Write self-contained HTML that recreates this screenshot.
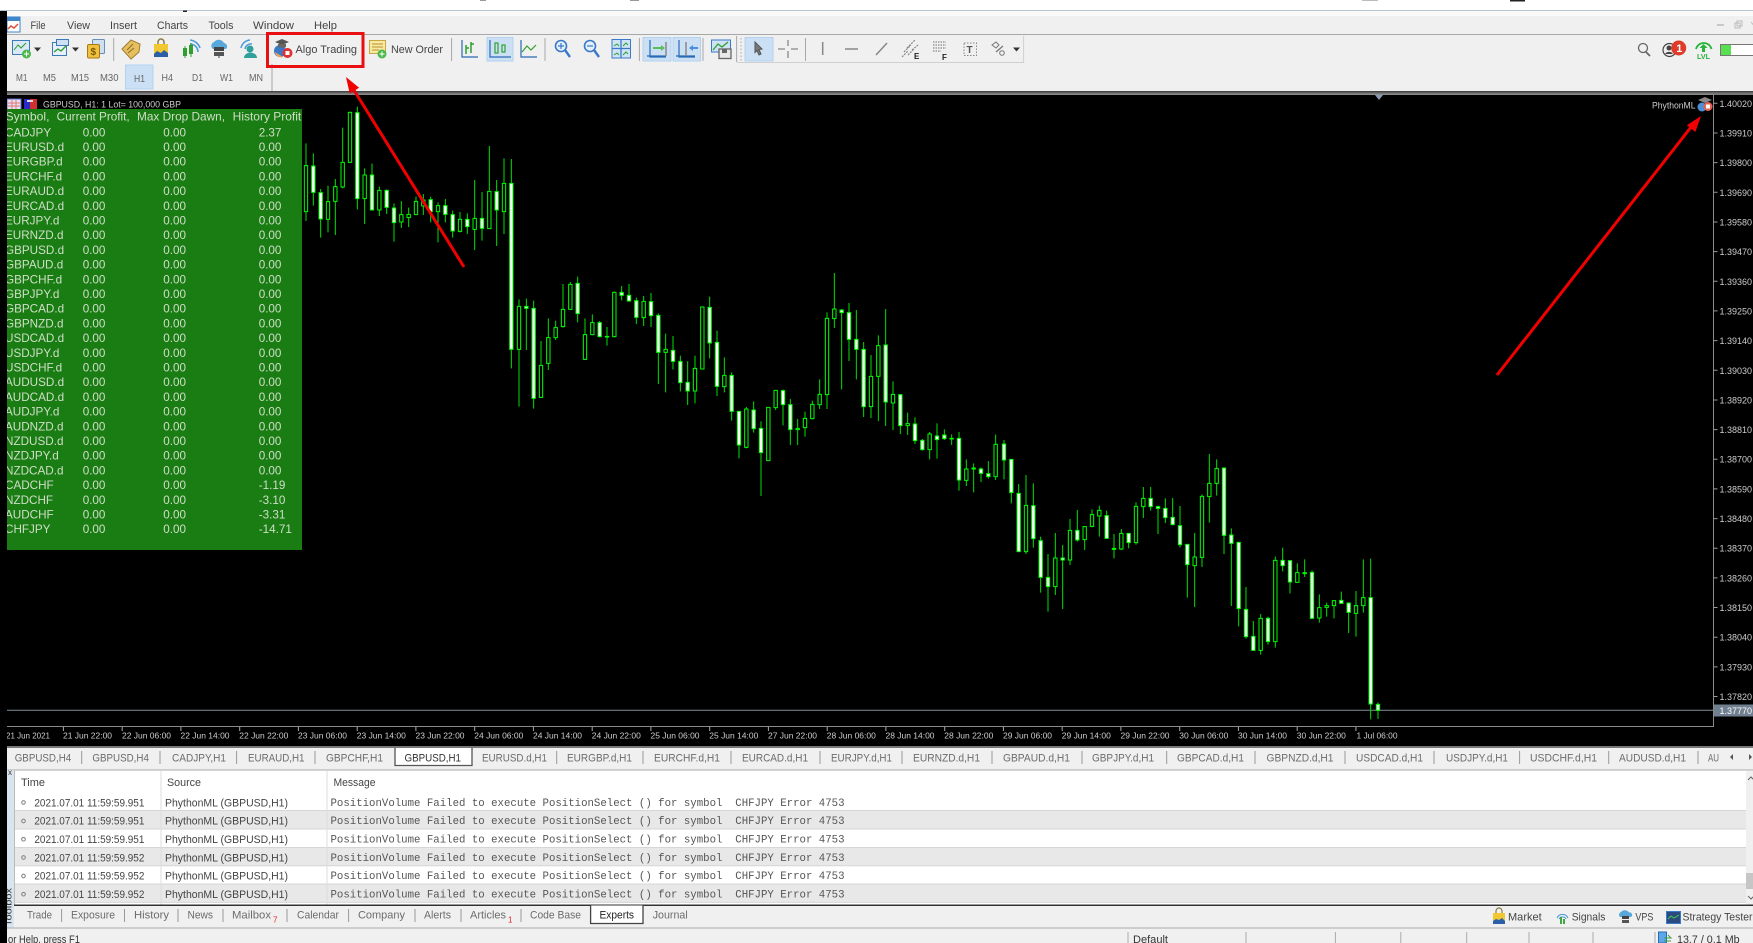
<!DOCTYPE html>
<html><head><meta charset="utf-8"><title>MetaTrader 5</title>
<style>
html,body{margin:0;padding:0;background:#000;width:1753px;height:943px;overflow:hidden}
svg{display:block;filter:blur(.35px)}
text{font-family:"Liberation Sans",sans-serif}
.m{font-size:11.3px;fill:#444}
.tf{font-size:10px;fill:#666}
.tb{font-size:11px;fill:#444}
.r{font-size:11.7px;fill:#cfdec6}
.p{font-size:9px;fill:#ccc}
.t{font-size:8.4px;fill:#ccc}
.tab{font-size:11px;fill:#6c6c6c}
.h{font-size:11px;fill:#444}
.c{font-size:11px;fill:#444}
.msg{font-family:"Liberation Mono",monospace;font-size:10.7px;fill:#555}
</style></head><body>
<svg width="1753" height="943" viewBox="0 0 1753 943" xmlns="http://www.w3.org/2000/svg">
<!-- base -->
<rect width="1753" height="943" fill="#f0f0f0"/>
<rect width="1753" height="10" fill="#fff"/>
<rect y="10" width="1753" height="1" fill="#b8c4d0"/>
<rect y="11" width="1753" height="5" fill="#fafafa"/>
<rect y="34" width="1753" height="1" fill="#a8a8a8"/>
<rect x="1362" y="0" width="16" height="1" fill="#bbb"/><rect x="1510" y="0" width="15" height="1.5" fill="#222"/><rect x="630" y="0" width="9" height="1" fill="#999"/><rect x="480" y="0" width="6" height="1" fill="#999"/><rect x="183" y="10.5" width="4" height="1.5" fill="#222"/>

<!-- menu -->
<g class="m">
<text class="m" x="30.5" y="29" textLength="15" lengthAdjust="spacingAndGlyphs">File</text>
<text class="m" x="67" y="29" textLength="23" lengthAdjust="spacingAndGlyphs">View</text>
<text class="m" x="110" y="29" textLength="27" lengthAdjust="spacingAndGlyphs">Insert</text>
<text class="m" x="157" y="29" textLength="31" lengthAdjust="spacingAndGlyphs">Charts</text>
<text class="m" x="208.5" y="29" textLength="25" lengthAdjust="spacingAndGlyphs">Tools</text>
<text class="m" x="253" y="29" textLength="41" lengthAdjust="spacingAndGlyphs">Window</text>
<text class="m" x="314" y="29" textLength="23" lengthAdjust="spacingAndGlyphs">Help</text>
</g>
<!-- app icon -->
<rect x="7" y="17" width="13" height="15" fill="#fff" stroke="#3f86c8"/><rect x="7" y="17" width="13" height="4" fill="#3f86c8"/><path d="M8 29l3-3 3 2 4-4" stroke="#e0503a" stroke-width="1.5" fill="none"/>
<path d="M1717 25h7" stroke="#bbb" stroke-width="1.5"/><rect x="1735" y="23" width="5" height="5" fill="none" stroke="#bbb"/><rect x="1737" y="21" width="5" height="5" fill="none" stroke="#bbb"/><path d="M1751 22l4 5" stroke="#bbb"/>

<!-- toolbar active backgrounds -->
<g fill="#cce0f5" stroke="#b4d2ee">
<rect x="487" y="37.5" width="26" height="23.5"/><rect x="643" y="37.5" width="28" height="23.5"/><rect x="673" y="37.5" width="27.5" height="23.5"/><rect x="745" y="37.5" width="28" height="23.5"/><rect x="125.5" y="65" width="27.5" height="24"/>
</g>
<!-- separators -->
<path d="M113.7 38v23M451.6 38v23M545 38v23M639.4 38v23M703 38v23M736.6 36v26M805.5 38v23M272 64v27" stroke="#a8a8a8"/>
<path d="M1023.6 36v26M737 62.5h287" stroke="#d0d0d0"/>
<path d="M741 38v23" stroke="#aaa" stroke-dasharray="1.5 2"/>

<!-- new chart -->
<rect x="12.5" y="40.5" width="17" height="14" fill="#dbe9f7" stroke="#3a7ab8"/><path d="M14 50l4-5 3 3 5-5" stroke="#2a9a2a" fill="none"/><circle cx="26.5" cy="54" r="4.5" fill="#4cb84c"/><path d="M24 54h5M26.5 51.5v5" stroke="#fff"/><path d="M34 47.5h7l-3.5 4z" fill="#333"/>
<!-- templates -->
<rect x="52.5" y="42.5" width="14" height="13" fill="#e8f1fa" stroke="#3a7ab8"/><rect x="56.5" y="39.5" width="12" height="6" fill="#cfe0f2" stroke="#3a7ab8"/><path d="M54 52l4-3 3 2 5-5" stroke="#2a9a2a" stroke-width="1.3" fill="none"/><path d="M72 47.5h7l-3.5 4z" fill="#333"/>
<!-- $ docs -->
<rect x="92.5" y="39.5" width="12" height="14" rx="1" fill="#cfe0f2" stroke="#6a8fb5"/><rect x="87.5" y="44.5" width="12" height="13.5" rx="1.5" fill="#f0c040" stroke="#a87a10"/><text x="90.5" y="55" style="font-size:10px;font-weight:bold;fill:#7a5a00">$</text>
<!-- tag -->
<path d="M122 49l9-9 9 4-1 8-8 7z" fill="#e6c060" stroke="#a07d30"/><path d="M127 50l6-6M128 53l6-5" stroke="#8a6a20"/>
<!-- bag -->
<path d="M158 44v-2a3 3 0 0 1 6 0v2" stroke="#8a7a40" fill="none" stroke-width="1.5"/><rect x="154" y="44" width="14" height="13" fill="#f2c832"/><path d="M154 57v-3l3-3 4 2 3-3 4 3v4z" fill="#2b5fa8"/>
<!-- signals -->
<path d="M190 44a8 8 0 0 1 8 8M190 40a12 12 0 0 1 10 8" stroke="#4a9ad4" stroke-width="1.6" fill="none"/><rect x="183" y="48" width="4" height="8" fill="#2fa02f"/><rect x="189" y="45" width="4" height="9" fill="#2fa02f"/><path d="M185 46v12M191 43v14" stroke="#2fa02f"/>
<!-- vps -->
<path d="M213 49a4 4 0 0 1 1-7 6 6 0 0 1 10 1 3.5 3.5 0 0 1 2 6z" fill="#58a8dc"/><rect x="214" y="47" width="10" height="4" fill="#444"/><rect x="214" y="52" width="10" height="4" fill="#555"/><path d="M219 56v2" stroke="#444"/>
<!-- profile -->
<path d="M250 40a10 10 0 0 0-9 8M252 44a6 6 0 0 0-7 5" stroke="#4a9ad4" stroke-width="1.5" fill="none"/><circle cx="250" cy="49" r="3.5" fill="#2fa09a"/><path d="M244 58a6 5 0 0 1 13 0z" fill="#2fa09a"/>
<!-- algo -->
<circle cx="280" cy="51" r="6" fill="#3a78c8"/><path d="M275 52a6 6 0 0 0 8 5z" fill="#f0a050"/><path d="M275 42l7-3 7 3-7 3z" fill="#555"/><path d="M278 44v3a5 2 0 0 0 8 0v-3" fill="#666"/><circle cx="287.5" cy="53" r="5" fill="#e03030"/><rect x="285.5" y="51" width="4" height="4" fill="#fff"/>
<text class="tb" x="295.5" y="53" textLength="61.5" lengthAdjust="spacingAndGlyphs">Algo Trading</text>
<!-- new order -->
<rect x="369.5" y="40.5" width="16" height="13" fill="#f8e9a0" stroke="#c8a640"/><path d="M372 44h11M372 47h11M372 50h7" stroke="#b89030"/><circle cx="382" cy="54" r="4.5" fill="#4cb84c"/><path d="M379.5 54h5M382 51.5v5" stroke="#fff"/>
<text class="tb" x="391" y="53" textLength="52" lengthAdjust="spacingAndGlyphs">New Order</text>
<!-- bars/candles/line -->
<g fill="none" stroke-width="1.2">
<path d="M462 40v17h16" stroke="#2a6ab5"/><path d="M466 45v9M469 48h-3M471 42v11M474 44h-3" stroke="#2fa02f" stroke-width="1.5"/>
<path d="M490 40v17h21" stroke="#2a6ab5"/><rect x="495" y="43" width="3" height="10" stroke="#2fa02f"/><rect x="502" y="45" width="3" height="7" stroke="#2fa02f"/>
<path d="M521 40v17h16" stroke="#2a6ab5"/><path d="M522 52l5-6 4 4 5-5" stroke="#2fa02f"/>
<circle cx="561" cy="46" r="5.5" stroke="#3a78c8" stroke-width="1.6" fill="#e4f0fb"/><path d="M565 50l5 7" stroke="#3a78c8" stroke-width="2.4"/><path d="M558 46h6M561 43v6" stroke="#3a78c8"/>
<circle cx="590" cy="46" r="5.5" stroke="#3a78c8" stroke-width="1.6" fill="#e4f0fb"/><path d="M594 50l5 7" stroke="#3a78c8" stroke-width="2.4"/><path d="M587 46h6" stroke="#3a78c8"/>
</g>
<!-- tile -->
<rect x="612" y="39.5" width="18.5" height="18.5" fill="#cfe3f7" stroke="#3a78c8"/><path d="M621 39.5v18.5M612 48.5h18.5" stroke="#3a78c8" stroke-width="1.3"/><path d="M614 46l3-2 2 2M623 46l3-3 2 2M614 55l3-2 2 2M623 55l3-3 2 2" stroke="#2fa02f" fill="none"/>
<!-- scroll/shift -->
<path d="M650 40v17h16M647 56h19" stroke="#2a6ab5" stroke-width="1.2" fill="none"/><path d="M653 47h8v-2l4 3-4 3v-2h-8z" fill="#5abf5a"/><path d="M666 42v14" stroke="#888" stroke-width="1.5"/>
<path d="M679 40v17h16M676 56h19" stroke="#2a6ab5" stroke-width="1.2" fill="none"/><path d="M698 47h-5v-2l-4 3 4 3v-2h5z" fill="#4a90e0"/><path d="M686 42v14" stroke="#888" stroke-width="1.5"/>
<!-- save -->
<rect x="711.5" y="40" width="19" height="12" fill="#cfe3f7" stroke="#3a78c8"/><path d="M713 50l5-6 4 3 6-5" stroke="#2fa02f" fill="none" stroke-width="1.3"/><rect x="719" y="49" width="12" height="9.5" fill="#e8e8e8" stroke="#666" stroke-width="1.3"/><rect x="722" y="49" width="5" height="4" fill="#666"/>
<!-- cursor -->
<path d="M755 42l7 7-3 .5 2 4.5-2 1-2-4.500-2 2z" fill="#777" stroke="#555"/>
<!-- crosshair -->
<path d="M788 40v6M788 51v7M778 49h7M791 49h7" stroke="#888" stroke-width="1.3"/>
<path d="M822.700 42v13M845 49h13M876 55l11-12" stroke="#888" stroke-width="1.5"/>
<!-- fib E -->
<path d="M902 57l6-6M904 52l7-7M907 48l8-8M908 55l6-6M912 50l6-5" stroke="#888" stroke-width="1.2" stroke-dasharray="2 1"/>
<text x="914" y="59" style="font-size:8px;font-weight:bold;fill:#222">E</text>
<path d="M933 42h13M933 45h13M933 48h13M933 51h8" stroke="#999" stroke-width="1.5" stroke-dasharray="1.500 1"/>
<text x="942" y="60" style="font-size:8px;font-weight:bold;fill:#222">F</text>
<rect x="964" y="43" width="12.5" height="12.5" fill="none" stroke="#888" stroke-dasharray="1.500 1.500"/>
<text x="966.500" y="53" style="font-size:10px;font-weight:bold;fill:#555">T</text>
<path d="M992 45l4-3 3 3-3 3z" fill="none" stroke="#777"/><path d="M996 52l7-6" stroke="#777" stroke-width="1.3"/><circle cx="1002" cy="53" r="2.300" fill="none" stroke="#777"/>
<path d="M1013 47.500h7l-3.500 4z" fill="#333"/>

<!-- timeframes -->
<g>
<text class="tf" x="16" y="81" textLength="11.500" lengthAdjust="spacingAndGlyphs">M1</text>
<text class="tf" x="43" y="81" textLength="13" lengthAdjust="spacingAndGlyphs">M5</text>
<text class="tf" x="71" y="81" textLength="18" lengthAdjust="spacingAndGlyphs">M15</text>
<text class="tf" x="100" y="81" textLength="18.500" lengthAdjust="spacingAndGlyphs">M30</text>
<text class="tf" x="134" y="82" textLength="11" lengthAdjust="spacingAndGlyphs">H1</text>
<text class="tf" x="161.500" y="81" textLength="11.500" lengthAdjust="spacingAndGlyphs">H4</text>
<text class="tf" x="192" y="81" textLength="11" lengthAdjust="spacingAndGlyphs">D1</text>
<text class="tf" x="220" y="81" textLength="13" lengthAdjust="spacingAndGlyphs">W1</text>
<text class="tf" x="249" y="81" textLength="14" lengthAdjust="spacingAndGlyphs">MN</text>
</g>
<!-- right top icons -->
<circle cx="1643" cy="48" r="4.500" fill="none" stroke="#666" stroke-width="1.300"/><path d="M1646 52l4 4" stroke="#666" stroke-width="1.800"/>
<circle cx="1669.500" cy="50" r="6.500" fill="#eee" stroke="#444" stroke-width="1.200"/><circle cx="1669" cy="48" r="2.500" fill="#444"/><path d="M1665 54a4.500 4 0 0 1 8 0" fill="#444"/>
<circle cx="1678.700" cy="48" r="7.500" fill="#e03a28"/><text x="1676.300" y="52" style="font-size:11px;font-weight:bold;fill:#fff">1</text>
<path d="M1696 49a8 8 0 0 1 15.500 0" stroke="#27b43a" stroke-width="1.800" fill="none"/><path d="M1703.500 44l-4 4h2.500v4h3v-4h2.500z" fill="#27b43a"/><text x="1697" y="59" textLength="13" lengthAdjust="spacingAndGlyphs" style="font-size:7px;font-weight:bold;fill:#27b43a">LVL</text>
<rect x="1720.500" y="44.500" width="34" height="11" fill="#fff" stroke="#777"/><rect x="1721" y="45" width="10" height="10" fill="#58e050"/>

<!-- chart -->
<rect x="0" y="91" width="1753" height="4" fill="#777"/><rect x="0" y="91" width="1753" height="1.500" fill="#444"/>
<rect x="0" y="95" width="1753" height="653" fill="#000"/>
<path d="M7 94.500H1713.500V726.500H7" fill="none" stroke="#8a8a8a"/>
<rect x="7" y="99" width="14" height="11" fill="#e6e0f0" stroke="#5a6ad0"/><path d="M8 103h12M8 106h12M12 100v9M16 100v9" stroke="#e07878"/>
<rect x="24" y="99" width="13" height="11" fill="#2a2ac8"/><rect x="30" y="99" width="7" height="11" fill="#d03030"/><rect x="27" y="100" width="6" height="2" fill="#ddd"/>
<text class="p" x="43" y="107.500" textLength="138" lengthAdjust="spacingAndGlyphs">GBPUSD, H1:  1 Lot= 100,000 GBP</text>
<path d="M1375 95h8l-4 5z" fill="#8a9bb0"/>
<text class="p" x="1652" y="108.500" textLength="43.500" lengthAdjust="spacingAndGlyphs">PhythonML</text>
<path d="M1698 100l7-3 7 3-7 3z" fill="#888"/><circle cx="1702" cy="107" r="4.500" fill="#4a90d8"/><circle cx="1708" cy="106.500" r="4.500" fill="#e86050"/><rect x="1706" y="104.500" width="4" height="4" fill="#fff"/>

<!-- table -->
<rect x="7" y="109" width="295" height="441" fill="#1a7d14"/>
<g class="r">
<text class="r" x="5.500" y="120.500" textLength="44" lengthAdjust="spacingAndGlyphs">Symbol,</text>
<text class="r" x="56.700" y="120.500" textLength="73" lengthAdjust="spacingAndGlyphs">Current Profit,</text>
<text class="r" x="137" y="120.500" textLength="88" lengthAdjust="spacingAndGlyphs">Max Drop Dawn,</text>
<text class="r" x="232.700" y="120.500" textLength="68.500" lengthAdjust="spacingAndGlyphs">History Profit</text>
<text class="r" y="136.300"><tspan x="5">CADJPY</tspan><tspan x="82.700">0.00</tspan><tspan x="163.300">0.00</tspan><tspan x="258.700">2.37</tspan></text>
<text class="r" y="151"><tspan x="5">EURUSD.d</tspan><tspan x="82.700">0.00</tspan><tspan x="163.300">0.00</tspan><tspan x="258.700">0.00</tspan></text>
<text class="r" y="165.700"><tspan x="5">EURGBP.d</tspan><tspan x="82.700">0.00</tspan><tspan x="163.300">0.00</tspan><tspan x="258.700">0.00</tspan></text>
<text class="r" y="180.400"><tspan x="5">EURCHF.d</tspan><tspan x="82.700">0.00</tspan><tspan x="163.300">0.00</tspan><tspan x="258.700">0.00</tspan></text>
<text class="r" y="195.100"><tspan x="5">EURAUD.d</tspan><tspan x="82.700">0.00</tspan><tspan x="163.300">0.00</tspan><tspan x="258.700">0.00</tspan></text>
<text class="r" y="209.800"><tspan x="5">EURCAD.d</tspan><tspan x="82.700">0.00</tspan><tspan x="163.300">0.00</tspan><tspan x="258.700">0.00</tspan></text>
<text class="r" y="224.500"><tspan x="5">EURJPY.d</tspan><tspan x="82.700">0.00</tspan><tspan x="163.300">0.00</tspan><tspan x="258.700">0.00</tspan></text>
<text class="r" y="239.200"><tspan x="5">EURNZD.d</tspan><tspan x="82.700">0.00</tspan><tspan x="163.300">0.00</tspan><tspan x="258.700">0.00</tspan></text>
<text class="r" y="253.900"><tspan x="5">GBPUSD.d</tspan><tspan x="82.700">0.00</tspan><tspan x="163.300">0.00</tspan><tspan x="258.700">0.00</tspan></text>
<text class="r" y="268.600"><tspan x="5">GBPAUD.d</tspan><tspan x="82.700">0.00</tspan><tspan x="163.300">0.00</tspan><tspan x="258.700">0.00</tspan></text>
<text class="r" y="283.300"><tspan x="5">GBPCHF.d</tspan><tspan x="82.700">0.00</tspan><tspan x="163.300">0.00</tspan><tspan x="258.700">0.00</tspan></text>
<text class="r" y="298"><tspan x="5">GBPJPY.d</tspan><tspan x="82.700">0.00</tspan><tspan x="163.300">0.00</tspan><tspan x="258.700">0.00</tspan></text>
<text class="r" y="312.700"><tspan x="5">GBPCAD.d</tspan><tspan x="82.700">0.00</tspan><tspan x="163.300">0.00</tspan><tspan x="258.700">0.00</tspan></text>
<text class="r" y="327.400"><tspan x="5">GBPNZD.d</tspan><tspan x="82.700">0.00</tspan><tspan x="163.300">0.00</tspan><tspan x="258.700">0.00</tspan></text>
<text class="r" y="342.100"><tspan x="5">USDCAD.d</tspan><tspan x="82.700">0.00</tspan><tspan x="163.300">0.00</tspan><tspan x="258.700">0.00</tspan></text>
<text class="r" y="356.800"><tspan x="5">USDJPY.d</tspan><tspan x="82.700">0.00</tspan><tspan x="163.300">0.00</tspan><tspan x="258.700">0.00</tspan></text>
<text class="r" y="371.500"><tspan x="5">USDCHF.d</tspan><tspan x="82.700">0.00</tspan><tspan x="163.300">0.00</tspan><tspan x="258.700">0.00</tspan></text>
<text class="r" y="386.200"><tspan x="5">AUDUSD.d</tspan><tspan x="82.700">0.00</tspan><tspan x="163.300">0.00</tspan><tspan x="258.700">0.00</tspan></text>
<text class="r" y="400.900"><tspan x="5">AUDCAD.d</tspan><tspan x="82.700">0.00</tspan><tspan x="163.300">0.00</tspan><tspan x="258.700">0.00</tspan></text>
<text class="r" y="415.600"><tspan x="5">AUDJPY.d</tspan><tspan x="82.700">0.00</tspan><tspan x="163.300">0.00</tspan><tspan x="258.700">0.00</tspan></text>
<text class="r" y="430.300"><tspan x="5">AUDNZD.d</tspan><tspan x="82.700">0.00</tspan><tspan x="163.300">0.00</tspan><tspan x="258.700">0.00</tspan></text>
<text class="r" y="445"><tspan x="5">NZDUSD.d</tspan><tspan x="82.700">0.00</tspan><tspan x="163.300">0.00</tspan><tspan x="258.700">0.00</tspan></text>
<text class="r" y="459.700"><tspan x="5">NZDJPY.d</tspan><tspan x="82.700">0.00</tspan><tspan x="163.300">0.00</tspan><tspan x="258.700">0.00</tspan></text>
<text class="r" y="474.400"><tspan x="5">NZDCAD.d</tspan><tspan x="82.700">0.00</tspan><tspan x="163.300">0.00</tspan><tspan x="258.700">0.00</tspan></text>
<text class="r" y="489.100"><tspan x="5">CADCHF</tspan><tspan x="82.700">0.00</tspan><tspan x="163.300">0.00</tspan><tspan x="258.700">-1.19</tspan></text>
<text class="r" y="503.800"><tspan x="5">NZDCHF</tspan><tspan x="82.700">0.00</tspan><tspan x="163.300">0.00</tspan><tspan x="258.700">-3.10</tspan></text>
<text class="r" y="518.500"><tspan x="5">AUDCHF</tspan><tspan x="82.700">0.00</tspan><tspan x="163.300">0.00</tspan><tspan x="258.700">-3.31</tspan></text>
<text class="r" y="533.200"><tspan x="5">CHFJPY</tspan><tspan x="82.700">0.00</tspan><tspan x="163.300">0.00</tspan><tspan x="258.700">-14.71</tspan></text>
</g>

<!-- price line -->
<path d="M7 710.300H1714" stroke="#7e8c96"/>

<!-- candles -->
<g transform="translate(300,90) scale(.33333)" stroke-width="3" stroke="#00e000">
<path fill="none" d="M18 160V393M40 190V347M62 297V443M84 287V427M106 267V435M128 113V295M150 65V218M172 50V358M194 235V402M216 221V361M238 290V378M260 298V372M282 340V455M304 333V414M326 353V411M348 320V375M370 312V375M392 320V397M414 337V457M436 327V397M458 362V443M480 366V427M502 370V432M524 270V480M546 306V452M568 168V416M590 270V468M612 205V432M634 207V835"/>
<path fill="#000" stroke="#00ff00" d="M13 227h10V365h-10zM79 335h10V388h-10zM101 290h10V334h-10zM123 217h10V291h-10zM145 67h10V217h-10zM189 255h10V326h-10zM233 301h10V360h-10zM299 374h10V396h-10zM321 373h10V383h-10zM343 334h10V374h-10zM365 330h10V348h-10zM409 347h10V365h-10zM475 388h10V424h-10zM519 385h10V418h-10zM563 304h10V416h-10zM607 280h10V365h-10z"/>
<path fill="#fff" stroke="#00ff00" d="M35 228h10V307h-10zM57 308h10V387h-10zM167 68h10V326h-10zM211 255h10V360h-10zM255 301h10V352h-10zM277 354h10V398h-10zM387 329h10V365h-10zM431 347h10V373h-10zM453 374h10V423h-10zM497 388h10V410h-10zM541 385h10V415h-10zM585 305h10V360h-10zM629 280h10V778h-10z"/>
</g>
<g transform="translate(500,260) scale(.33333)" stroke-width="3" stroke="#00e000">
<path fill="none" d="M57 118V440M79 116V270M101 122V446M123 243V414M145 175V330M167 182V240M189 72V203M211 66V149M233 50V187M255 175V300M277 163V226M299 183V232M321 201V257M343 94V232M365 78V121M387 72V125M409 113V192M431 108V198M453 99V201M475 160V372M497 221V397M519 228V328M541 287V394M563 304V435M585 287V430M607 139V328M629 110V295M651 212V408M673 292V397M695 337V482M717 453V595M739 441V565M761 424V518M783 484V708M805 441V603M827 390V450M849 388V496M871 417V555M893 477V555M915 455V530M937 422V478M959 358V447M981 157V447M1003 39V204M1025 147V388M1047 129V303M1069 150V358M1091 246V471M1113 285V474M1135 226V483M1157 147V498M1179 364V510M1201 403V522M1223 458V525M1245 472V552M1267 537V572M1289 516V598M1311 490V596M1333 508V540M1355 523V555M1377 516V692M1399 598V678M1421 610V697M1443 622V666M1465 603V656M1487 524V660"/>
<path fill="#000" stroke="#00ff00" d="M52 139h10V268h-10zM118 316h10V412h-10zM140 233h10V310h-10zM162 203h10V233h-10zM184 148h10V200h-10zM206 73h10V148h-10zM250 224h10V298h-10zM272 188h10V224h-10zM316 229h10V231h-10zM338 97h10V230h-10zM426 124h10V173h-10zM492 268h10V277h-10zM580 325h10V393h-10zM602 141h10V327h-10zM668 346h10V380h-10zM734 447h10V562h-10zM800 442h10V602h-10zM822 391h10V443h-10zM888 505h10V509h-10zM910 475h10V503h-10zM932 433h10V476h-10zM954 403h10V434h-10zM976 175h10V404h-10zM998 147h10V176h-10zM1108 349h10V440h-10zM1130 257h10V349h-10zM1174 403h10V429h-10zM1218 491h10V497h-10zM1284 522h10V569h-10zM1350 535h10V537h-10zM1394 627h10V661h-10zM1416 624h10V627h-10zM1482 553h10V650h-10z"/>
<path fill="#fff" stroke="#00ff00" d="M74 139h10V145h-10zM96 145h10V415h-10zM228 70h10V161h-10zM294 188h10V230h-10zM360 97h10V106h-10zM382 106h10V123h-10zM404 122h10V172h-10zM448 125h10V167h-10zM470 166h10V277h-10zM514 271h10V304h-10zM536 304h10V368h-10zM558 367h10V393h-10zM624 142h10V249h-10zM646 247h10V379h-10zM690 346h10V454h-10zM712 454h10V555h-10zM756 450h10V506h-10zM778 505h10V578h-10zM844 392h10V434h-10zM866 434h10V509h-10zM1020 150h10V158h-10zM1042 158h10V238h-10zM1064 238h10V268h-10zM1086 268h10V440h-10zM1152 255h10V426h-10zM1196 404h10V497h-10zM1240 492h10V542h-10zM1262 541h10V569h-10zM1306 528h10V539h-10zM1328 525h10V536h-10zM1372 535h10V660h-10zM1438 627h10V640h-10zM1460 641h10V650h-10z"/>
</g>
<g transform="translate(1000,440) scale(.33333)" stroke-width="3" stroke="#00e000">
<path fill="none" d="M12 0V118M34 58V190M56 132V335M78 105V342M100 130V323M122 290V458M144 342V515M166 279V465M188 315V507M210 237V375M232 210V305M254 258V330M276 208V262M298 197V290M320 212V297M342 282V355M364 267V330M386 280V325M408 187V314M430 141V234M452 141V212M474 197V282M496 175V249M518 174V256M540 198V322M562 313V473M584 279V501M606 163V381M628 42V248M650 58V167M672 83V342M694 265V498M716 305V559M738 441V596M760 543V632M782 522V644M804 530V614M826 350V623M848 323V394M870 362V460M892 370V428M914 358V411M936 391V537M958 463V548M980 488V530M1002 481V535M1024 455V491M1046 488V579M1068 453V590M1090 358V518M1112 356V838M1134 787V837"/>
<path fill="#000" stroke="#00ff00" d="M73 196h10V335h-10zM161 354h10V440h-10zM205 271h10V360h-10zM249 260h10V299h-10zM271 224h10V259h-10zM293 211h10V228h-10zM337 325h10V328h-10zM359 280h10V327h-10zM403 199h10V308h-10zM425 175h10V200h-10zM579 351h10V377h-10zM601 169h10V352h-10zM623 130h10V170h-10zM645 86h10V130h-10zM777 535h10V631h-10zM821 361h10V605h-10zM887 398h10V427h-10zM909 398h10V401h-10zM953 503h10V534h-10zM975 497h10V502h-10zM997 482h10V497h-10zM1063 497h10V520h-10zM1085 473h10V497h-10z"/>
<path fill="#fff" stroke="#00ff00" d="M7 12h10V60h-10zM29 58h10V158h-10zM51 160h10V335h-10zM95 197h10V296h-10zM117 302h10V412h-10zM139 412h10V440h-10zM183 354h10V360h-10zM227 271h10V300h-10zM315 227h10V295h-10zM381 280h10V308h-10zM447 175h10V200h-10zM469 200h10V205h-10zM491 205h10V233h-10zM513 232h10V254h-10zM535 257h10V314h-10zM557 313h10V374h-10zM667 84h10V286h-10zM689 285h10V310h-10zM711 307h10V506h-10zM733 508h10V590h-10zM755 589h10V631h-10zM799 535h10V605h-10zM843 361h10V377h-10zM865 362h10V426h-10zM931 397h10V535h-10zM1019 481h10V490h-10zM1041 489h10V517h-10zM1107 473h10V792h-10zM1129 793h10V811h-10z"/>
</g>

<!-- price axis -->
<g>
<path d="M1713.500 103.300h4M1713.500 133h4M1713.500 162.600h4M1713.500 192.300h4M1713.500 222h4M1713.500 251.600h4M1713.500 281.300h4M1713.500 310.900h4M1713.500 340.600h4M1713.500 370.300h4M1713.500 400h4M1713.500 429.600h4M1713.500 459.200h4M1713.500 488.900h4M1713.500 518.600h4M1713.500 548.200h4M1713.500 577.900h4M1713.500 607.500h4M1713.500 637.200h4M1713.500 666.900h4M1713.500 696.500h4" stroke="#999"/>
<text class="p" x="1719.500" y="106.800">1.40020</text><text class="p" x="1719.500" y="136.500">1.39910</text><text class="p" x="1719.500" y="166.100">1.39800</text><text class="p" x="1719.500" y="195.800">1.39690</text><text class="p" x="1719.500" y="225.500">1.39580</text><text class="p" x="1719.500" y="255.100">1.39470</text><text class="p" x="1719.500" y="284.800">1.39360</text><text class="p" x="1719.500" y="314.400">1.39250</text><text class="p" x="1719.500" y="344.100">1.39140</text><text class="p" x="1719.500" y="373.800">1.39030</text><text class="p" x="1719.500" y="403.500">1.38920</text><text class="p" x="1719.500" y="433.100">1.38810</text><text class="p" x="1719.500" y="462.700">1.38700</text><text class="p" x="1719.500" y="492.400">1.38590</text><text class="p" x="1719.500" y="522.100">1.38480</text><text class="p" x="1719.500" y="551.700">1.38370</text><text class="p" x="1719.500" y="581.400">1.38260</text><text class="p" x="1719.500" y="611">1.38150</text><text class="p" x="1719.500" y="640.700">1.38040</text><text class="p" x="1719.500" y="670.400">1.37930</text><text class="p" x="1719.500" y="700">1.37820</text>
</g>
<rect x="1714" y="704.500" width="39" height="12" fill="#708090"/><text class="p" x="1719.500" y="714" style="fill:#fff">1.37770</text>

<!-- time axis -->
<path d="M63.400 727v4M122.200 727v4M180.900 727v4M239.700 727v4M298.400 727v4M357.200 727v4M415.900 727v4M474.700 727v4M533.400 727v4M592.200 727v4M650.900 727v4M709.700 727v4M768.400 727v4M827.200 727v4M885.900 727v4M944.700 727v4M1003.400 727v4M1062.200 727v4M1120.900 727v4M1179.700 727v4M1238.400 727v4M1297.200 727v4M1355.900 727v4" stroke="#aaa"/>
<g>
<text class="t" x="6" y="738.500" textLength="44" lengthAdjust="spacingAndGlyphs">21 Jun 2021</text>
<text class="t" x="63" y="738.500" textLength="49" lengthAdjust="spacingAndGlyphs">21 Jun 22:00</text>
<text class="t" x="122" y="738.500" textLength="49" lengthAdjust="spacingAndGlyphs">22 Jun 06:00</text>
<text class="t" x="180.500" y="738.500" textLength="49" lengthAdjust="spacingAndGlyphs">22 Jun 14:00</text>
<text class="t" x="239.300" y="738.500" textLength="49" lengthAdjust="spacingAndGlyphs">22 Jun 22:00</text>
<text class="t" x="298" y="738.500" textLength="49" lengthAdjust="spacingAndGlyphs">23 Jun 06:00</text>
<text class="t" x="356.800" y="738.500" textLength="49" lengthAdjust="spacingAndGlyphs">23 Jun 14:00</text>
<text class="t" x="415.500" y="738.500" textLength="49" lengthAdjust="spacingAndGlyphs">23 Jun 22:00</text>
<text class="t" x="474.300" y="738.500" textLength="49" lengthAdjust="spacingAndGlyphs">24 Jun 06:00</text>
<text class="t" x="533" y="738.500" textLength="49" lengthAdjust="spacingAndGlyphs">24 Jun 14:00</text>
<text class="t" x="591.800" y="738.500" textLength="49" lengthAdjust="spacingAndGlyphs">24 Jun 22:00</text>
<text class="t" x="650.500" y="738.500" textLength="49" lengthAdjust="spacingAndGlyphs">25 Jun 06:00</text>
<text class="t" x="709.300" y="738.500" textLength="49" lengthAdjust="spacingAndGlyphs">25 Jun 14:00</text>
<text class="t" x="768" y="738.500" textLength="49" lengthAdjust="spacingAndGlyphs">27 Jun 22:00</text>
<text class="t" x="826.800" y="738.500" textLength="49" lengthAdjust="spacingAndGlyphs">28 Jun 06:00</text>
<text class="t" x="885.500" y="738.500" textLength="49" lengthAdjust="spacingAndGlyphs">28 Jun 14:00</text>
<text class="t" x="944.300" y="738.500" textLength="49" lengthAdjust="spacingAndGlyphs">28 Jun 22:00</text>
<text class="t" x="1003" y="738.500" textLength="49" lengthAdjust="spacingAndGlyphs">29 Jun 06:00</text>
<text class="t" x="1061.800" y="738.500" textLength="49" lengthAdjust="spacingAndGlyphs">29 Jun 14:00</text>
<text class="t" x="1120.500" y="738.500" textLength="49" lengthAdjust="spacingAndGlyphs">29 Jun 22:00</text>
<text class="t" x="1179.300" y="738.500" textLength="49" lengthAdjust="spacingAndGlyphs">30 Jun 06:00</text>
<text class="t" x="1238" y="738.500" textLength="49" lengthAdjust="spacingAndGlyphs">30 Jun 14:00</text>
<text class="t" x="1296.800" y="738.500" textLength="49" lengthAdjust="spacingAndGlyphs">30 Jun 22:00</text>
<text class="t" x="1356.500" y="738.500" textLength="41" lengthAdjust="spacingAndGlyphs">1 Jul 06:00</text>
</g>

<!-- chart tabs -->
<rect x="0" y="746" width="1753" height="2" fill="#777"/>
<rect x="0" y="748" width="1753" height="22" fill="#f0f0f0"/>
<path d="M395 748V765.500H472V748" fill="#fff" stroke="#555" stroke-width="1.300"/>
<path d="M81.700 751v13M160 751v13M236.600 751v13M315 751v13M556.700 751v13M643 751v13M731 751v13M820 751v13M902 751v13M992 751v13M1082 751v13M1166.700 751v13M1255 751v13M1345 751v13M1434 751v13M1519.600 751v13M1608.700 751v13M1698 751v13" stroke="#999"/>
<g>
<text class="tab" x="14.700" y="761.500" textLength="56.500" lengthAdjust="spacingAndGlyphs">GBPUSD,H4</text>
<text class="tab" x="92.400" y="761.500" textLength="56.500" lengthAdjust="spacingAndGlyphs">GBPUSD,H4</text>
<text class="tab" x="172" y="761.500" textLength="54" lengthAdjust="spacingAndGlyphs">CADJPY,H1</text>
<text class="tab" x="248" y="761.500" textLength="56.500" lengthAdjust="spacingAndGlyphs">EURAUD,H1</text>
<text class="tab" x="326" y="761.500" textLength="57" lengthAdjust="spacingAndGlyphs">GBPCHF,H1</text>
<text class="tab" x="404.500" y="761.500" textLength="56.500" lengthAdjust="spacingAndGlyphs" style="fill:#333">GBPUSD,H1</text>
<text class="tab" x="482" y="761.500" textLength="65" lengthAdjust="spacingAndGlyphs">EURUSD.d,H1</text>
<text class="tab" x="567" y="761.500" textLength="65" lengthAdjust="spacingAndGlyphs">EURGBP.d,H1</text>
<text class="tab" x="654" y="761.500" textLength="66" lengthAdjust="spacingAndGlyphs">EURCHF.d,H1</text>
<text class="tab" x="742" y="761.500" textLength="66" lengthAdjust="spacingAndGlyphs">EURCAD.d,H1</text>
<text class="tab" x="831" y="761.500" textLength="61" lengthAdjust="spacingAndGlyphs">EURJPY.d,H1</text>
<text class="tab" x="913" y="761.500" textLength="67" lengthAdjust="spacingAndGlyphs">EURNZD.d,H1</text>
<text class="tab" x="1003" y="761.500" textLength="67" lengthAdjust="spacingAndGlyphs">GBPAUD.d,H1</text>
<text class="tab" x="1092" y="761.500" textLength="62" lengthAdjust="spacingAndGlyphs">GBPJPY.d,H1</text>
<text class="tab" x="1177" y="761.500" textLength="67" lengthAdjust="spacingAndGlyphs">GBPCAD.d,H1</text>
<text class="tab" x="1266.500" y="761.500" textLength="67" lengthAdjust="spacingAndGlyphs">GBPNZD.d,H1</text>
<text class="tab" x="1356" y="761.500" textLength="67" lengthAdjust="spacingAndGlyphs">USDCAD.d,H1</text>
<text class="tab" x="1446" y="761.500" textLength="62" lengthAdjust="spacingAndGlyphs">USDJPY.d,H1</text>
<text class="tab" x="1530" y="761.500" textLength="67" lengthAdjust="spacingAndGlyphs">USDCHF.d,H1</text>
<text class="tab" x="1619" y="761.500" textLength="67" lengthAdjust="spacingAndGlyphs">AUDUSD.d,H1</text>
<text class="tab" x="1708" y="761.500" textLength="11" lengthAdjust="spacingAndGlyphs">AU</text>
</g>
<path d="M1733 754v6l-3-3zM1749 754v6l3-3z" fill="#555"/>

<!-- toolbox panel -->
<rect x="0" y="769.500" width="1753" height="1" fill="#aaa"/>
<rect x="7" y="770" width="7.500" height="158" fill="#d9e4ef"/>
<rect x="14.500" y="770.500" width="1739" height="134.500" fill="#fff"/>
<path d="M14.500 770.500V905" stroke="#bbb"/>
<text x="8" y="775" style="font-size:8px;fill:#333">x</text>
<rect x="15" y="810.300" width="1731" height="18.700" fill="#e8e8e8"/>
<rect x="15" y="847.300" width="1731" height="18.400" fill="#e8e8e8"/>
<rect x="15" y="884" width="1731" height="18.300" fill="#e8e8e8"/>
<path d="M15 810.500H1746M15 829H1746M15 847.500H1746M15 865.800H1746M15 884H1746M15 902.400H1746" stroke="#d6d6d6"/>
<path d="M161 771V905M327 771V905" stroke="#ddd"/>
<rect x="1746" y="771" width="7" height="134" fill="#f0f0f0"/><rect x="1746" y="873" width="7" height="16" fill="#c6c6c6"/><path d="M1748 780l3-3 3 3M1748 896l3 3 3-3" fill="none" stroke="#666"/>
<text class="h" x="21" y="786" textLength="24" lengthAdjust="spacingAndGlyphs">Time</text>
<text class="h" x="167" y="786" textLength="34" lengthAdjust="spacingAndGlyphs">Source</text>
<text class="h" x="333.500" y="786" textLength="42" lengthAdjust="spacingAndGlyphs">Message</text>
<g fill="none" stroke="#888" stroke-width="1.100"><circle cx="23.500" cy="802.500" r="1.800"/><circle cx="23.500" cy="821" r="1.800"/><circle cx="23.500" cy="839.200" r="1.800"/><circle cx="23.500" cy="857.500" r="1.800"/><circle cx="23.500" cy="876" r="1.800"/><circle cx="23.500" cy="894.200" r="1.800"/></g>
<g>
<text class="c" x="34.400" y="806.300" textLength="110" lengthAdjust="spacingAndGlyphs">2021.07.01 11:59:59.951</text><text class="c" x="165" y="806.300" textLength="123" lengthAdjust="spacingAndGlyphs">PhythonML (GBPUSD,H1)</text><text class="msg" x="330.500" y="805.800" textLength="514" lengthAdjust="spacingAndGlyphs">PositionVolume Failed to execute PositionSelect () for symbol&#160;&#160;CHFJPY Error 4753</text>
<text class="c" x="34.400" y="824.700" textLength="110" lengthAdjust="spacingAndGlyphs">2021.07.01 11:59:59.951</text><text class="c" x="165" y="824.700" textLength="123" lengthAdjust="spacingAndGlyphs">PhythonML (GBPUSD,H1)</text><text class="msg" x="330.500" y="824.200" textLength="514" lengthAdjust="spacingAndGlyphs">PositionVolume Failed to execute PositionSelect () for symbol&#160;&#160;CHFJPY Error 4753</text>
<text class="c" x="34.400" y="843" textLength="110" lengthAdjust="spacingAndGlyphs">2021.07.01 11:59:59.951</text><text class="c" x="165" y="843" textLength="123" lengthAdjust="spacingAndGlyphs">PhythonML (GBPUSD,H1)</text><text class="msg" x="330.500" y="842.500" textLength="514" lengthAdjust="spacingAndGlyphs">PositionVolume Failed to execute PositionSelect () for symbol&#160;&#160;CHFJPY Error 4753</text>
<text class="c" x="34.400" y="861.300" textLength="110" lengthAdjust="spacingAndGlyphs">2021.07.01 11:59:59.952</text><text class="c" x="165" y="861.300" textLength="123" lengthAdjust="spacingAndGlyphs">PhythonML (GBPUSD,H1)</text><text class="msg" x="330.500" y="860.800" textLength="514" lengthAdjust="spacingAndGlyphs">PositionVolume Failed to execute PositionSelect () for symbol&#160;&#160;CHFJPY Error 4753</text>
<text class="c" x="34.400" y="879.700" textLength="110" lengthAdjust="spacingAndGlyphs">2021.07.01 11:59:59.952</text><text class="c" x="165" y="879.700" textLength="123" lengthAdjust="spacingAndGlyphs">PhythonML (GBPUSD,H1)</text><text class="msg" x="330.500" y="879.200" textLength="514" lengthAdjust="spacingAndGlyphs">PositionVolume Failed to execute PositionSelect () for symbol&#160;&#160;CHFJPY Error 4753</text>
<text class="c" x="34.400" y="898" textLength="110" lengthAdjust="spacingAndGlyphs">2021.07.01 11:59:59.952</text><text class="c" x="165" y="898" textLength="123" lengthAdjust="spacingAndGlyphs">PhythonML (GBPUSD,H1)</text><text class="msg" x="330.500" y="897.500" textLength="514" lengthAdjust="spacingAndGlyphs">PositionVolume Failed to execute PositionSelect () for symbol&#160;&#160;CHFJPY Error 4753</text>
</g>

<!-- bottom tabs -->
<rect x="14" y="904.500" width="1739" height="1.500" fill="#333"/>
<rect x="14" y="906" width="1739" height="22" fill="#f0f0f0"/>
<path d="M590.600 905.500V923.500H643V905.500" fill="#fff" stroke="#444" stroke-width="1.300"/>
<path d="M61.600 909v13M124.500 909v13M178 909v13M223 909v13M287 909v13M348.600 909v13M415 909v13M461 909v13M521 909v13" stroke="#999"/>
<g>
<text class="tab" x="27" y="918.500" textLength="25" lengthAdjust="spacingAndGlyphs">Trade</text>
<text class="tab" x="71" y="918.500" textLength="44" lengthAdjust="spacingAndGlyphs">Exposure</text>
<text class="tab" x="134" y="918.500" textLength="35" lengthAdjust="spacingAndGlyphs">History</text>
<text class="tab" x="187.500" y="918.500" textLength="25.500" lengthAdjust="spacingAndGlyphs">News</text>
<text class="tab" x="232" y="918.500" textLength="39" lengthAdjust="spacingAndGlyphs">Mailbox</text>
<text x="273" y="922.500" style="font-size:8px;fill:#e02020">7</text>
<text class="tab" x="297" y="918.500" textLength="42" lengthAdjust="spacingAndGlyphs">Calendar</text>
<text class="tab" x="358" y="918.500" textLength="47" lengthAdjust="spacingAndGlyphs">Company</text>
<text class="tab" x="424" y="918.500" textLength="27" lengthAdjust="spacingAndGlyphs">Alerts</text>
<text class="tab" x="470" y="918.500" textLength="36" lengthAdjust="spacingAndGlyphs">Articles</text>
<text x="508" y="922.500" style="font-size:8px;fill:#e02020">1</text>
<text class="tab" x="530" y="918.500" textLength="51" lengthAdjust="spacingAndGlyphs">Code Base</text>
<text class="tab" x="599.500" y="918.500" textLength="34.500" lengthAdjust="spacingAndGlyphs" style="fill:#222">Experts</text>
<text class="tab" x="652.700" y="918.500" textLength="35" lengthAdjust="spacingAndGlyphs">Journal</text>
</g>
<!-- bottom right -->
<path d="M1496 913v-2a3 3 0 0 1 6 0v2" stroke="#8a7a40" fill="none" stroke-width="1.200"/><rect x="1493" y="913" width="12" height="11" fill="#f2c832"/><path d="M1493 924v-3l3-2 3 1 3-2 3 3v3z" fill="#2b5fa8"/>
<text class="h" x="1508" y="920.500" textLength="33.700" lengthAdjust="spacingAndGlyphs">Market</text>
<path d="M1557 918a6 6 0 0 1 11 0M1559 919a4 4 0 0 1 7 0" stroke="#4a9ad4" fill="none"/><path d="M1561 917v7M1564 919v5" stroke="#2fa02f" stroke-width="1.800"/>
<text class="h" x="1571.700" y="920.500" textLength="33.700" lengthAdjust="spacingAndGlyphs">Signals</text>
<path d="M1620 917a3 3 0 0 1 1-5 5 5 0 0 1 8 .5 2.500 2.500 0 0 1 2 4.500z" fill="#58a8dc"/><rect x="1622" y="916" width="7" height="3" fill="#444"/><rect x="1622" y="920" width="7" height="3" fill="#555"/>
<text class="h" x="1635.400" y="920.500" textLength="18" lengthAdjust="spacingAndGlyphs">VPS</text>
<rect x="1666.500" y="911.500" width="14" height="12" fill="#2a4a80" stroke="#3a78c8"/><path d="M1668 919l3-3 3 2 5-3" stroke="#45d045" fill="none"/>
<text class="h" x="1682.500" y="920.500" textLength="70" lengthAdjust="spacingAndGlyphs">Strategy Tester</text>

<!-- status bar -->
<rect x="0" y="927.500" width="1753" height="1" fill="#aaa"/>
<path d="M1128 932v11M1246 932v11M1335.400 932v11M1400.800 932v11M1466.700 932v11M1529 932v11M1593 932v11M1655 932v11" stroke="#aaa"/>
<text class="h" x="8" y="943" textLength="72" lengthAdjust="spacingAndGlyphs" style="fill:#333">or Help, press F1</text>
<text class="h" x="1133" y="943" textLength="35" lengthAdjust="spacingAndGlyphs" style="fill:#333">Default</text>
<rect x="1658.500" y="932" width="8" height="11" fill="#5aa8e8" stroke="#2a6ab5"/><path d="M1664 938h7l-3-3M1671 941h-7" stroke="#3aa040" fill="none"/>
<text class="h" x="1677" y="943" textLength="62.600" lengthAdjust="spacingAndGlyphs" style="fill:#333">13.7 / 0.1 Mb</text>

<!-- Toolbox vertical text + left black strip -->
<text transform="translate(11.500,926) rotate(-90)" textLength="38" lengthAdjust="spacingAndGlyphs" style="font-size:9.500px;fill:#333">Toolbox</text>
<rect x="0" y="11" width="7" height="932" fill="#000"/>

<!-- red annotations -->
<rect x="267.500" y="33.500" width="95.500" height="33" fill="none" stroke="#e81010" stroke-width="3"/>
<path d="M464 267L352 87" stroke="#f00000" stroke-width="3" fill="none"/>
<path d="M346 77L359.100 87.700 349.700 93.500z" fill="#f00000"/>
<path d="M1497 375L1695 122" stroke="#f00000" stroke-width="3" fill="none"/>
<path d="M1701 116L1695.400 132 1686.800 125.200z" fill="#f00000"/>
</svg>
</body></html>
